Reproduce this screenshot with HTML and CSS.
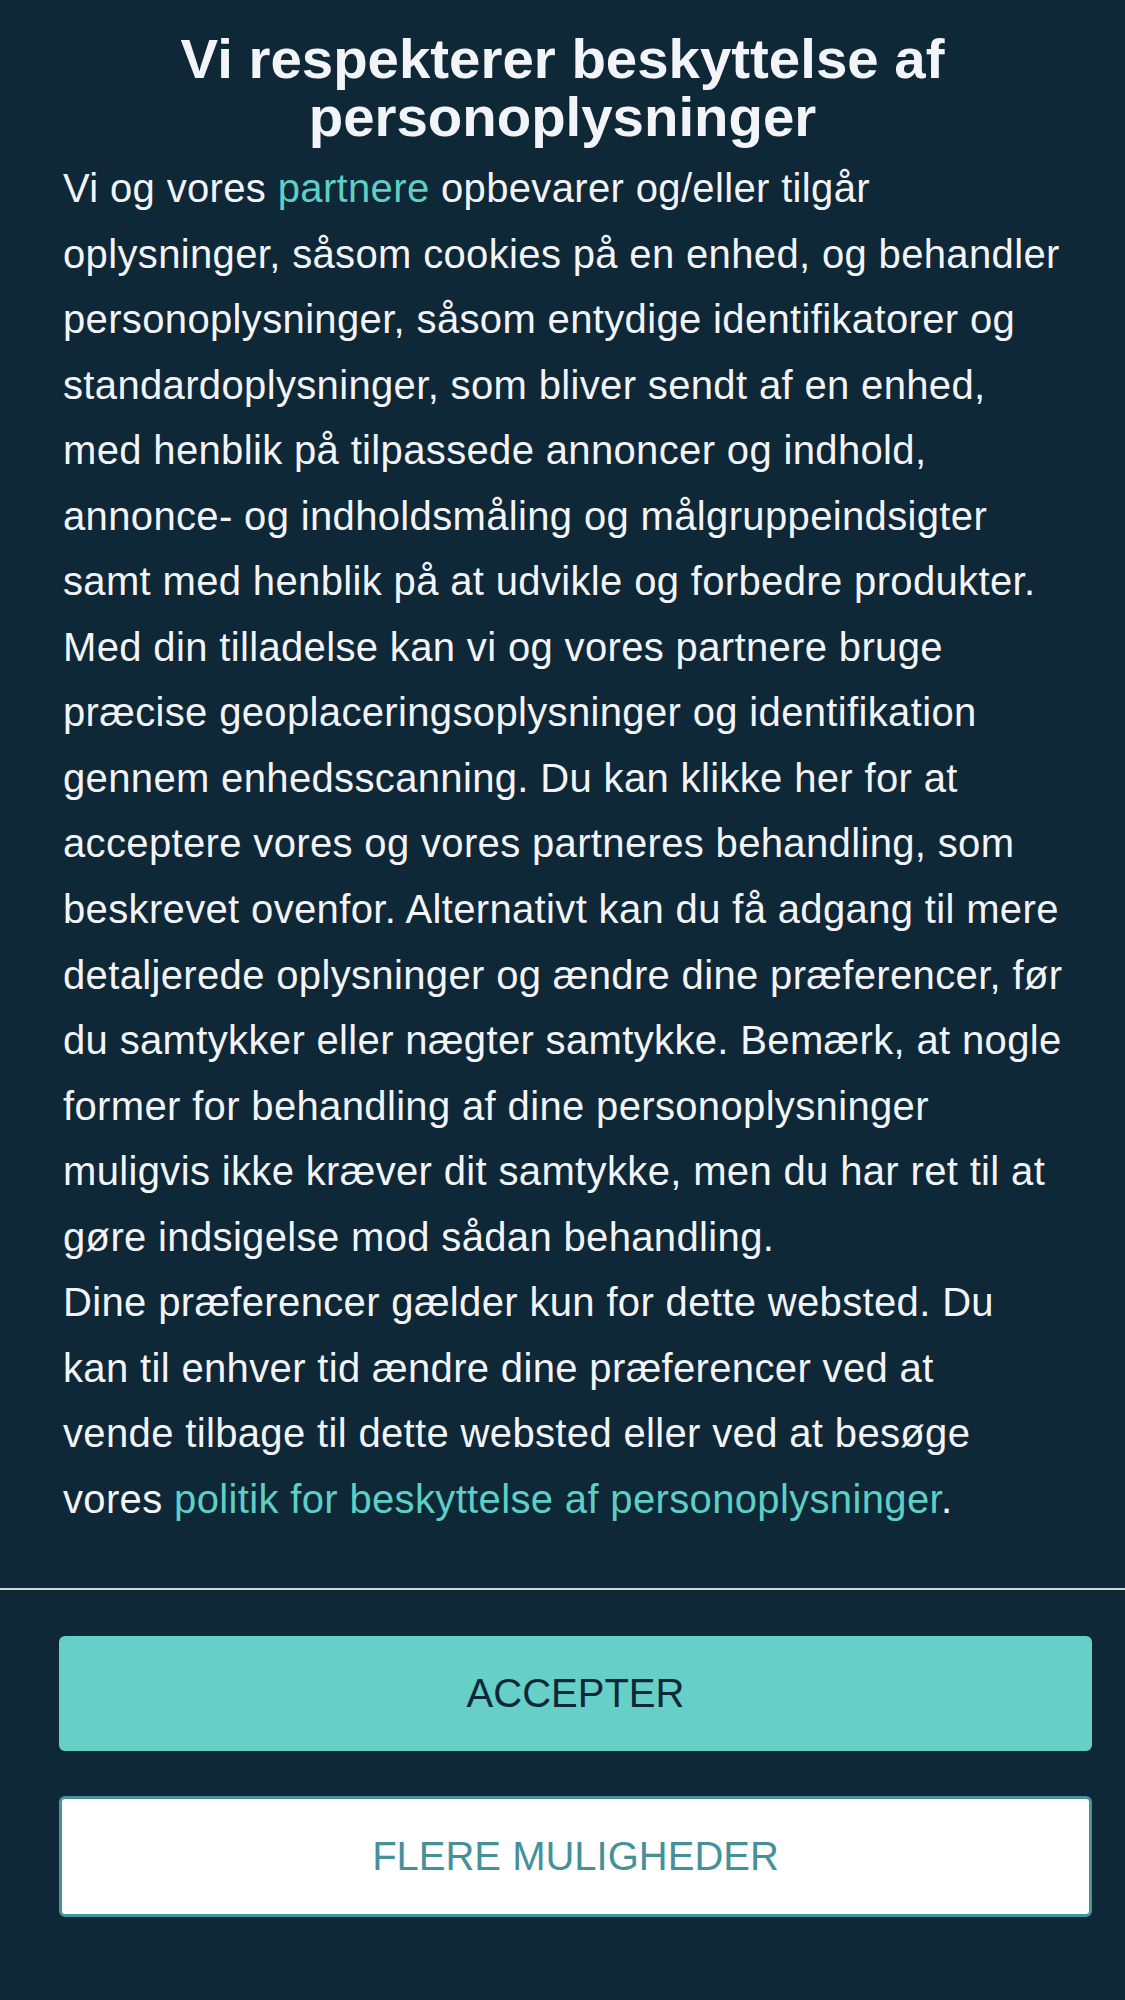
FILE: index.html
```html
<!DOCTYPE html>
<html lang="da">
<head>
<meta charset="utf-8">
<title>Samtykke</title>
<link rel="stylesheet" href="styles.css">
</head>
<body>
<div class="dialog">
  <div class="content">
    <h1 class="title">Vi respekterer beskyttelse af personoplysninger</h1>
    <div class="text">
      <p class="para">Vi og vores <a class="link" href="#">partnere</a> opbevarer og/eller tilgår<br>
oplysninger, såsom cookies på en enhed, og behandler<br>
personoplysninger, såsom entydige identifikatorer og<br>
standardoplysninger, som bliver sendt af en enhed,<br>
med henblik på tilpassede annoncer og indhold,<br>
annonce- og indholdsmåling og målgruppeindsigter<br>
samt med henblik på at udvikle og forbedre produkter.<br>
Med din tilladelse kan vi og vores partnere bruge<br>
præcise geoplaceringsoplysninger og identifikation<br>
gennem enhedsscanning. Du kan klikke her for at<br>
acceptere vores og vores partneres behandling, som<br>
beskrevet ovenfor. Alternativt kan du få adgang til mere<br>
detaljerede oplysninger og ændre dine præferencer, før<br>
du samtykker eller nægter samtykke. Bemærk, at nogle<br>
former for behandling af dine personoplysninger<br>
muligvis ikke kræver dit samtykke, men du har ret til at<br>
gøre indsigelse mod sådan behandling.</p>
      <p class="para">Dine præferencer gælder kun for dette websted. Du<br>
kan til enhver tid ændre dine præferencer ved at<br>
vende tilbage til dette websted eller ved at besøge<br>
vores <a class="link" href="#">politik for beskyttelse af personoplysninger</a>.</p>
    </div>
  </div>
  <div class="divider"></div>
  <div class="actions">
    <button class="btn btn-accept" type="button">ACCEPTER</button>
    <button class="btn btn-more" type="button">FLERE MULIGHEDER</button>
  </div>
</div>
</body>
</html>
```

FILE: styles.css
```css
html, body {
  margin: 0;
  padding: 0;
  background: #0e2837;
}
body {
  width: 1125px;
  min-height: 2000px;
  font-family: "Liberation Sans", Arial, Helvetica, sans-serif;
  color: #f3f4f7;
}
.dialog {
  display: flex;
  flex-direction: column;
}
.content {
  padding: 30px 12px 0 63px;
  display: flex;
  flex-direction: column;
  gap: 10px;
}
.title {
  margin: 0 46px 0 -5px;
  font-size: 56.4px;
  line-height: 58px;
  font-weight: 700;
  text-align: center;
  color: #f3f4f7;
}
.text {
  font-size: 40px;
  line-height: 65.55px;
  letter-spacing: 0.35px;
  white-space: nowrap;
}
.para {
  margin: 0;
}
.link {
  color: #5fcfc6;
  text-decoration: none;
}
.divider {
  margin-top: 56px;
  height: 2px;
  background: #d4d6d8;
}
.actions {
  display: flex;
  flex-direction: column;
  gap: 45px;
  padding: 46px 33px 0 59px;
}
.btn {
  font-family: "Liberation Sans", Arial, Helvetica, sans-serif;
  font-size: 40px;
  border-radius: 6px;
  cursor: pointer;
  display: flex;
  align-items: center;
  justify-content: center;
  padding: 0;
}
.btn-accept {
  height: 115px;
  background: #66cfc7;
  color: #0e2837;
  border: none;
}
.btn-more {
  height: 121px;
  background: #ffffff;
  color: #46909a;
  border: 3px solid #48939c;
}
```
